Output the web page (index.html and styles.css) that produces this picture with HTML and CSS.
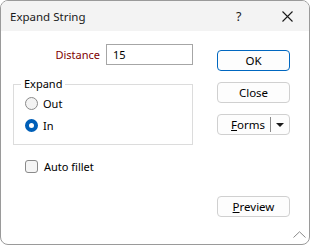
FILE: index.html
```html
<!DOCTYPE html>
<html lang="en">
<head>
  <meta charset="UTF-8" />
  <title>Expand String</title>
  <link rel="stylesheet" href="styles.css">
</head>
<body>
  <div class="window">
    <div class="titlebar">
      <span class="title">Expand String</span>
      <span class="help">?</span>
      <span class="close-x">
        <svg width="11" height="11" viewBox="0 0 11 11">
          <path d="M0.5 0.5 L10.5 10.5 M10.5 0.5 L0.5 10.5" stroke="#1a1a1a" stroke-width="1.1" fill="none"/>
        </svg>
      </span>
    </div>

    <div class="content">
      <div class="left">
        <div class="field-row">
          <label class="field-label">Distance</label>
          <div class="textbox">15</div>
        </div>

        <fieldset class="group">
          <legend>Expand</legend>
          <div class="radio-row"><span class="radio"></span>Out</div>
          <div class="radio-row"><span class="radio checked"></span>In</div>
        </fieldset>

        <div class="check-row"><span class="checkbox"></span>Auto fillet</div>
      </div>

      <div class="buttons">
        <button class="btn default">OK</button>
        <button class="btn">Close</button>
        <button class="btn split">
          <span class="split-main"><u>F</u>orms</span>
          <span class="split-sep"></span>
          <span class="split-arrow"></span>
        </button>
        <button class="btn preview"><u>P</u>review</button>
      </div>
    </div>

    <!-- resize grip -->
    <svg class="grip" width="13" height="7" viewBox="0 0 13 7">
      <path d="M0.5 6.5 L6.5 0.8 L12.5 6.5" stroke="#8a8a8a" stroke-width="1" fill="none"/>
    </svg>
  </div>
</body>
</html>
```

FILE: styles.css
```css
body {
  margin: 0;
  font-family: "Segoe UI", "Noto Sans", sans-serif;
  font-size: 11px;
  color: #000;
}
.window {
  position: relative;
  width: 310px;
  height: 245px;
  box-sizing: border-box;
  border: 1px solid #9a9a9a;
  border-radius: 8px;
  background: #fff;
  overflow: hidden;
}
.titlebar {
  height: 30px;
  background: #f3f3f3;
  display: flex;
  align-items: center;
  padding-left: 9px;
  color: #1a1a1a;
}
.title {
  flex: 1;
  font-size: 11.5px;
}
.help {
  font-size: 12.5px;
  width: 10px;
  margin-right: 36px;
}
.close-x {
  display: flex;
  margin-right: 16px;
}
.content {
  display: flex;
  padding-left: 12px;
}
.left {
  width: 180px;
  padding-top: 13px;
}
.field-row {
  display: flex;
  align-items: center;
  gap: 6px;
}
.field-label {
  width: 87px;
  text-align: right;
  color: #800000;
}
.textbox {
  width: 87px;
  height: 21px;
  box-sizing: border-box;
  border: 1px solid #a6a6a6;
  padding-left: 6px;
  line-height: 19px;
}
.group {
  margin: 11px 0 0 0;
  padding: 0 0 8px 0;
  border: 1px solid #dcdcdc;
  min-width: 0;
}
.group legend {
  margin-left: 7px;
  padding: 0 3px;
  line-height: 16px;
}
.radio-row, .check-row {
  display: flex;
  align-items: center;
  height: 22px;
}
.radio-row {
  padding-left: 11px;
}
.radio {
  width: 13px;
  height: 13px;
  box-sizing: border-box;
  border: 1px solid #8a8a8a;
  border-radius: 50%;
  background: #f3f3f3;
  margin-right: 5px;
}
.radio.checked {
  border: 4px solid #005fb8;
  background: #fff;
}
.check-row {
  margin-top: 10px;
  padding-left: 12px;
}
.checkbox {
  width: 13px;
  height: 13px;
  box-sizing: border-box;
  border: 1px solid #8a8a8a;
  border-radius: 3px;
  background: #f5f5f5;
  margin-right: 6px;
}
.buttons {
  display: flex;
  flex-direction: column;
  gap: 11px;
  width: 73px;
  margin-left: 24px;
  padding-top: 19px;
}
.btn {
  height: 21px;
  box-sizing: border-box;
  border: 1px solid #d0d0d0;
  border-radius: 4px;
  background: #fdfdfd;
  font: inherit;
  font-size: 11.5px;
  color: #000;
  padding: 0;
}
.btn.default {
  border-color: #0067c0;
}
.btn u {
  text-decoration-thickness: 1px;
}
.split {
  display: flex;
  align-items: center;
}
.split-main {
  flex: 1;
  text-align: right;
  padding-right: 5px;
}
.split-sep {
  width: 1px;
  height: 15px;
  background: #8a8a8a;
}
.split-arrow {
  width: 0;
  height: 0;
  border-left: 4px solid transparent;
  border-right: 4px solid transparent;
  border-top: 4px solid #1a1a1a;
  margin: 0 5px 0 5px;
}
.preview {
  margin-top: 50px;
}
.grip {
  position: absolute;
  right: 3px;
  bottom: 6px;
}
```
